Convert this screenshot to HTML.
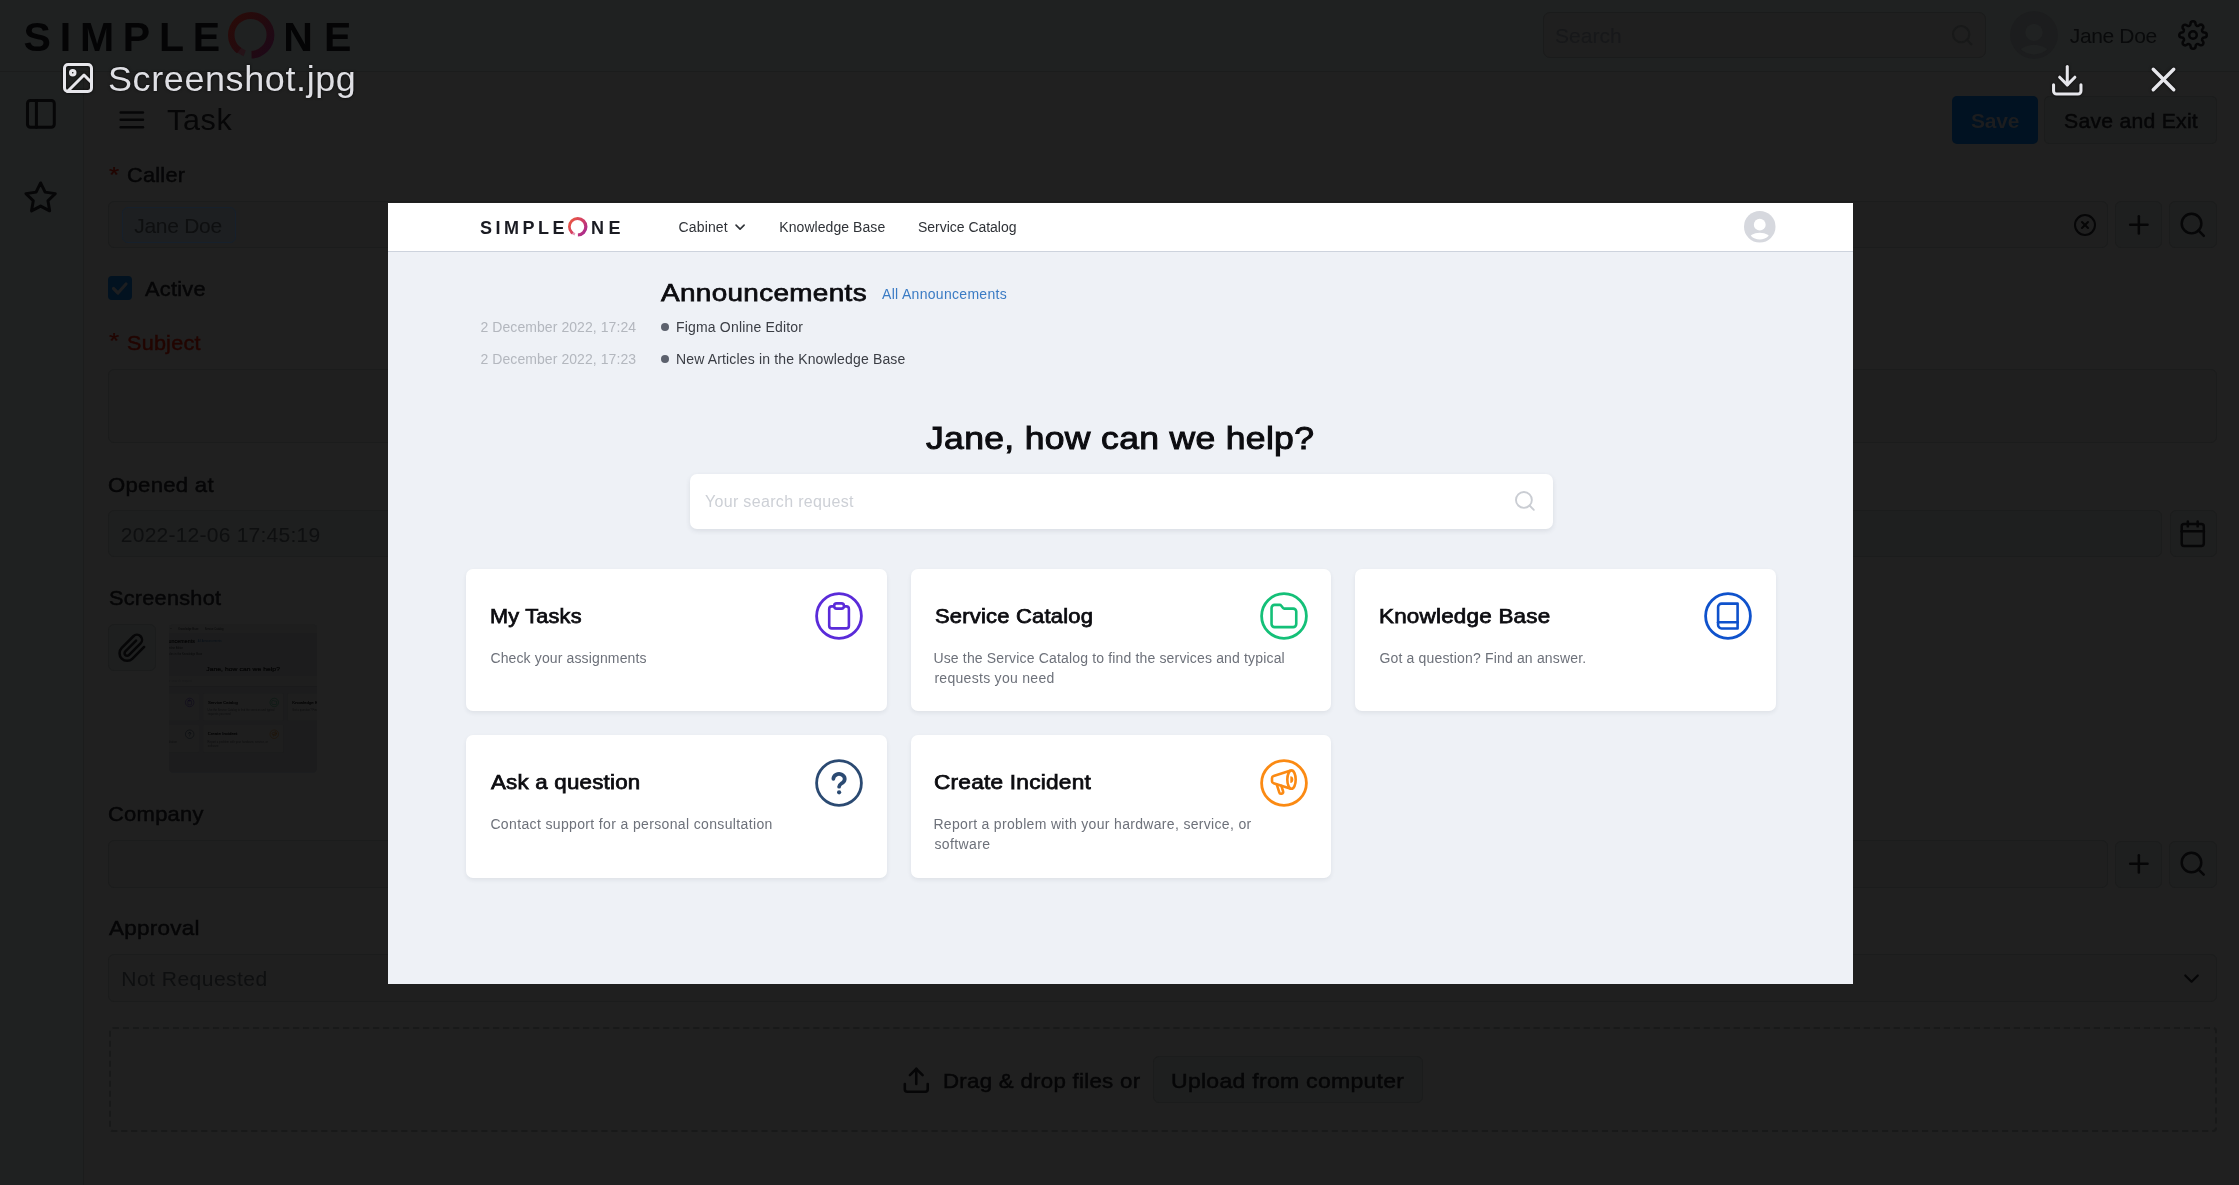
<!DOCTYPE html>
<html lang="en">
<head>
<meta charset="utf-8">
<title>Task - Screenshot.jpg</title>
<style>
html,body{margin:0;padding:0;}
body{width:2239px;height:1185px;overflow:hidden;position:relative;background:#202020;
font-family:"Liberation Sans", sans-serif;-webkit-font-smoothing:antialiased;}
#under,#topbar{position:absolute;left:0;top:0;width:2239px;height:1185px;will-change:transform;}
#modal{position:absolute;left:388px;top:203px;width:1465px;height:781px;background:#eef1f6;overflow:hidden;will-change:transform;}
</style>
</head>
<body>
<div id="under">
<div style="position:absolute;left:0.00px;top:0.00px;width:2239.00px;height:72.00px;box-sizing:border-box;background:#1f2121;border-bottom:1px solid #1b1c1c;"></div>
<div style="position:absolute;left:0.00px;top:72.00px;width:84.00px;height:1113.00px;box-sizing:border-box;background:#1f2121;border-right:1px solid #1b1c1c;"></div>
<span style="position:absolute;left:23.60px;top:16.50px;white-space:nowrap;line-height:1;font-size:41px;font-weight:700;color:#040405;letter-spacing:8.784px;">SIMPLE</span>
<span style="position:absolute;left:283.20px;top:16.50px;white-space:nowrap;line-height:1;font-size:41px;font-weight:700;color:#040405;letter-spacing:11.191px;">NE</span>
<svg style="position:absolute;left:224.30px;top:8.00px;overflow:visible;" width="54.4" height="54.4" viewBox="0 0 54.4 54.4"><defs><linearGradient id="lg1" gradientUnits="userSpaceOnUse" x1="4.00" y1="12.12" x2="50.40" y2="45.76"><stop offset="0" stop-color="#2a0b08"/><stop offset="0.5" stop-color="#230a0e"/><stop offset="1" stop-color="#1c0819"/></linearGradient><clipPath id="lg1a"><polygon points="27.20,27.20 -1.37,63.76 -12.15,51.79 -18.19,36.85 -18.75,20.74 -13.77,5.42 -3.85,-7.28 9.82,-15.82 25.58,-19.17 41.54,-16.93 55.77,-9.36 66.55,2.61 72.59,17.55 73.15,33.66 68.17,48.98 58.25,61.68 44.58,70.22 28.82,73.57 28.01,73.59"/></clipPath><clipPath id="lg1b"><polygon points="27.20,27.20 19.55,48.21 12.83,44.33 10.07,41.57"/></clipPath></defs><path d="M4.00 27.20 a23.20 23.20 0 1 0 46.40 0 a23.20 23.20 0 1 0 -46.40 0 z M10.50 26.96 a16.03 16.03 0 1 0 32.06 0 a16.03 16.03 0 1 0 -32.06 0 z" fill="#251318" fill-rule="evenodd" clip-path="url(#lg1b)"/><path d="M4.00 27.20 a23.20 23.20 0 1 0 46.40 0 a23.20 23.20 0 1 0 -46.40 0 z M10.50 26.96 a16.03 16.03 0 1 0 32.06 0 a16.03 16.03 0 1 0 -32.06 0 z" fill="url(#lg1)" fill-rule="evenodd" clip-path="url(#lg1a)"/></svg>
<div style="position:absolute;left:1542.50px;top:11.60px;width:443.10px;height:46.80px;box-sizing:border-box;background:#1f1f1f;border:1px solid #1a1b1b;border-radius:7px;"></div>
<span style="position:absolute;left:1555.00px;top:24.70px;white-space:nowrap;line-height:1;font-size:21px;font-weight:400;color:#17181a;letter-spacing:0.028px;">Search</span>
<svg style="position:absolute;left:1950.22px;top:23.42px;overflow:visible" width="24.36" height="24.36" viewBox="0 0 24 24" fill="none" stroke="#181919" stroke-width="2.0" stroke-linecap="round" stroke-linejoin="round"><circle cx="11" cy="11" r="8"/><line x1="21" y1="21" x2="16.65" y2="16.65"/></svg>
<svg style="position:absolute;left:2009.80px;top:10.70px;overflow:visible;" width="48" height="48" viewBox="0 0 48 48"><defs><clipPath id="av1"><circle cx="24" cy="24" r="19.6"/></clipPath></defs><circle cx="24" cy="24" r="23.8" fill="#1c1d1e"/><g clip-path="url(#av1)" fill="#202222"><circle cx="24" cy="21.4" r="8.7"/><ellipse cx="24" cy="46" rx="17" ry="12.3"/></g></svg>
<span style="position:absolute;left:2069.80px;top:25.40px;white-space:nowrap;line-height:1;font-size:21px;font-weight:400;color:#090a0b;letter-spacing:-0.360px;">Jane Doe</span>
<svg style="position:absolute;left:2178.00px;top:20.00px;overflow:visible" width="30.00" height="30.00" viewBox="0 0 24 24" fill="none" stroke="#060607" stroke-width="2.0" stroke-linecap="round" stroke-linejoin="round"><circle cx="12" cy="12" r="3"/><path d="M19.4 15a1.65 1.65 0 0 0 .33 1.82l.06.06a2 2 0 0 1 0 2.83 2 2 0 0 1-2.83 0l-.06-.06a1.65 1.65 0 0 0-1.82-.33 1.65 1.65 0 0 0-1 1.51V21a2 2 0 0 1-2 2 2 2 0 0 1-2-2v-.09A1.65 1.65 0 0 0 9 19.4a1.65 1.65 0 0 0-1.82.33l-.06.06a2 2 0 0 1-2.83 0 2 2 0 0 1 0-2.83l.06-.06a1.65 1.65 0 0 0 .33-1.82 1.65 1.65 0 0 0-1.51-1H3a2 2 0 0 1-2-2 2 2 0 0 1 2-2h.09A1.65 1.65 0 0 0 4.6 9a1.65 1.65 0 0 0-.33-1.82l-.06-.06a2 2 0 0 1 0-2.83 2 2 0 0 1 2.83 0l.06.06a1.65 1.65 0 0 0 1.82.33H9a1.65 1.65 0 0 0 1-1.51V3a2 2 0 0 1 2-2 2 2 0 0 1 2 2v.09a1.65 1.65 0 0 0 1 1.51 1.65 1.65 0 0 0 1.82-.33l.06-.06a2 2 0 0 1 2.83 0 2 2 0 0 1 0 2.83l-.06.06a1.65 1.65 0 0 0-.33 1.82V9a1.65 1.65 0 0 0 1.51 1H21a2 2 0 0 1 2 2 2 2 0 0 1-2 2h-.09a1.65 1.65 0 0 0-1.51 1z"/></svg>
<svg style="position:absolute;left:23.47px;top:96.27px;overflow:visible" width="35.76" height="35.76" viewBox="0 0 24 24" fill="none" stroke="#060607" stroke-width="2.0" stroke-linecap="round" stroke-linejoin="round"><rect x="3" y="3" width="18" height="18" rx="2" ry="2"/><line x1="9" y1="3" x2="9" y2="21"/></svg>
<svg style="position:absolute;left:23.29px;top:180.37px;overflow:visible" width="35.22" height="35.22" viewBox="0 0 24 24" fill="none" stroke="#060607" stroke-width="2.0" stroke-linecap="round" stroke-linejoin="round"><polygon points="12 2 15.09 8.26 22 9.27 17 14.14 18.18 21.02 12 17.77 5.82 21.02 7 14.14 2 9.27 8.91 8.26 12 2"/></svg>
<svg style="position:absolute;left:117.32px;top:105.17px;overflow:visible" width="29.67" height="29.67" viewBox="0 0 24 24" fill="none" stroke="#060607" stroke-width="2.0" stroke-linecap="round" stroke-linejoin="round"><line x1="3" y1="12" x2="21" y2="12"/><line x1="3" y1="6" x2="21" y2="6"/><line x1="3" y1="18" x2="21" y2="18"/></svg>
<span style="position:absolute;left:167.00px;top:106.00px;white-space:nowrap;line-height:1;font-size:29px;font-weight:400;color:#060607;letter-spacing:0.6px;transform:scaleX(1.0528);transform-origin:0 0;">Task</span>
<div style="position:absolute;left:1952.00px;top:96.00px;width:86.00px;height:48.00px;box-sizing:border-box;background:#011222;border-radius:5px;"></div>
<span style="position:absolute;left:1971.00px;top:109.80px;white-space:nowrap;line-height:1;font-size:21px;font-weight:700;color:#1c1d1f;letter-spacing:-0.222px;">Save</span>
<div style="position:absolute;left:2044.00px;top:96.00px;width:172.80px;height:48.00px;box-sizing:border-box;background:#1e1f1f;border:1px solid #1b1c1c;border-radius:5px;"></div>
<span style="position:absolute;left:2063.70px;top:109.80px;white-space:nowrap;line-height:1;font-size:21px;font-weight:400;color:#060607;letter-spacing:0.25px;transform:scaleX(1.0087);transform-origin:0 0;-webkit-text-stroke:0.45px #060607;">Save and Exit</span>
<span style="position:absolute;left:108.90px;top:164.35px;white-space:nowrap;line-height:1;font-size:26px;font-weight:400;color:#220500;letter-spacing:0.000px;-webkit-text-stroke:0.3px #220500;transform:scaleY(0.82);transform-origin:0 0;">*</span>
<span style="position:absolute;left:126.77px;top:163.80px;white-space:nowrap;line-height:1;font-size:21px;font-weight:400;color:#060607;letter-spacing:0.25px;transform:scaleX(1.0344);transform-origin:0 0;-webkit-text-stroke:0.45px #060607;">Caller</span>
<div style="position:absolute;left:108.10px;top:201.40px;width:2000.20px;height:47.10px;box-sizing:border-box;background:#1f1f1f;border:1px solid #1b1c1c;border-radius:6px;"></div>
<div style="position:absolute;left:122.30px;top:207.20px;width:113.50px;height:35.50px;box-sizing:border-box;background:#1d1f21;border:1px solid #16202c;border-radius:6px;"></div>
<span style="position:absolute;left:134.20px;top:215.00px;white-space:nowrap;line-height:1;font-size:21px;font-weight:400;color:#0e0f10;letter-spacing:-0.274px;">Jane Doe</span>
<svg style="position:absolute;left:2072.80px;top:213.40px;overflow:visible" width="24.00" height="24.00" viewBox="0 0 24 24" fill="none" stroke="#060607" stroke-width="2.0" stroke-linecap="round" stroke-linejoin="round"><circle cx="12" cy="12" r="10"/><line x1="15" y1="9" x2="9" y2="15"/><line x1="9" y1="9" x2="15" y2="15"/></svg>
<div style="position:absolute;left:2115.40px;top:201.40px;width:47.10px;height:47.10px;box-sizing:border-box;background:#1e1f1f;border:1px solid #1b1c1c;border-radius:6px;"></div>
<svg style="position:absolute;left:2124.25px;top:210.15px;overflow:visible" width="29.70" height="29.70" viewBox="0 0 24 24" fill="none" stroke="#060607" stroke-width="2.0" stroke-linecap="round" stroke-linejoin="round"><line x1="12" y1="5" x2="12" y2="19"/><line x1="5" y1="12" x2="19" y2="12"/></svg>
<div style="position:absolute;left:2168.80px;top:201.40px;width:48.00px;height:47.10px;box-sizing:border-box;background:#1e1f1f;border:1px solid #1b1c1c;border-radius:6px;"></div>
<svg style="position:absolute;left:2178.29px;top:210.49px;overflow:visible" width="29.52" height="29.52" viewBox="0 0 24 24" fill="none" stroke="#060607" stroke-width="2.0" stroke-linecap="round" stroke-linejoin="round"><circle cx="11" cy="11" r="8"/><line x1="21" y1="21" x2="16.65" y2="16.65"/></svg>
<div style="position:absolute;left:108.40px;top:276.00px;width:23.20px;height:24.00px;box-sizing:border-box;background:#021220;border-radius:4px;"></div>
<svg style="position:absolute;left:108.40px;top:276.00px;overflow:visible;" width="23.2" height="24" viewBox="0 0 23.2 24"><polyline points="5.5,12.5 10,17 18,8" fill="none" stroke="#1d1e20" stroke-width="3.2" stroke-linecap="round" stroke-linejoin="round"/></svg>
<span style="position:absolute;left:144.80px;top:278.00px;white-space:nowrap;line-height:1;font-size:21px;font-weight:400;color:#060607;letter-spacing:0.25px;transform:scaleX(1.0354);transform-origin:0 0;-webkit-text-stroke:0.45px #060607;">Active</span>
<span style="position:absolute;left:108.90px;top:330.05px;white-space:nowrap;line-height:1;font-size:26px;font-weight:400;color:#220500;letter-spacing:0.000px;-webkit-text-stroke:0.3px #220500;transform:scaleY(0.82);transform-origin:0 0;">*</span>
<span style="position:absolute;left:127.40px;top:331.80px;white-space:nowrap;line-height:1;font-size:21px;font-weight:400;color:#220500;letter-spacing:0.25px;transform:scaleX(1.0264);transform-origin:0 0;-webkit-text-stroke:0.45px #220500;">Subject</span>
<div style="position:absolute;left:108.10px;top:369.00px;width:2108.70px;height:74.40px;box-sizing:border-box;background:#1f1f1f;border:1px solid #1b1c1c;border-radius:6px;"></div>
<span style="position:absolute;left:107.75px;top:473.70px;white-space:nowrap;line-height:1;font-size:21px;font-weight:400;color:#060607;letter-spacing:0.25px;transform:scaleX(1.0550);transform-origin:0 0;-webkit-text-stroke:0.45px #060607;">Opened at</span>
<div style="position:absolute;left:108.10px;top:510.10px;width:2054.10px;height:47.10px;box-sizing:border-box;background:#1e1f1f;border:1px solid #1b1c1c;border-radius:6px;"></div>
<span style="position:absolute;left:120.80px;top:524.20px;white-space:nowrap;line-height:1;font-size:21px;font-weight:400;color:#0e0f10;letter-spacing:0.238px;">2022-12-06 17:45:19</span>
<div style="position:absolute;left:2169.60px;top:510.10px;width:47.20px;height:47.10px;box-sizing:border-box;background:#1e1f1f;border:1px solid #1b1c1c;border-radius:6px;"></div>
<svg style="position:absolute;left:2178.45px;top:519.15px;overflow:visible" width="29.50" height="29.50" viewBox="0 0 24 24" fill="none" stroke="#060607" stroke-width="2.0" stroke-linecap="round" stroke-linejoin="round"><rect x="3" y="4" width="18" height="18" rx="2" ry="2"/><line x1="16" y1="2" x2="16" y2="6"/><line x1="8" y1="2" x2="8" y2="6"/><line x1="3" y1="10" x2="21" y2="10"/></svg>
<span style="position:absolute;left:108.80px;top:587.00px;white-space:nowrap;line-height:1;font-size:21px;font-weight:400;color:#060607;letter-spacing:0.25px;transform:scaleX(1.0327);transform-origin:0 0;-webkit-text-stroke:0.45px #060607;">Screenshot</span>
<div style="position:absolute;left:108.40px;top:624.10px;width:47.20px;height:47.40px;box-sizing:border-box;background:#1e1f1f;border:1px solid #1b1c1c;border-radius:6px;"></div>
<svg style="position:absolute;left:116.52px;top:633.47px;overflow:visible" width="30.37" height="30.37" viewBox="0 0 24 24" fill="none" stroke="#060607" stroke-width="2.0" stroke-linecap="round" stroke-linejoin="round"><path d="M21.44 11.05l-9.19 9.19a6 6 0 0 1-8.49-8.49l9.19-9.19a4 4 0 0 1 5.66 5.66l-9.2 9.19a2 2 0 0 1-2.83-2.83l8.49-8.48"/></svg>
<div style="position:absolute;left:168.6px;top:624.2px;width:148.8px;height:148.9px;border-radius:5px;overflow:hidden;background:#1c1e21;"><div style="position:absolute;left:-64.78px;top:0;width:1465px;height:781px;background:#eef1f6;transform:scale(0.19);transform-origin:0 0;filter:brightness(0.118);"><div style="position:absolute;left:0.00px;top:0.00px;width:1465.00px;height:49.00px;box-sizing:border-box;background:#fff;border-bottom:1px solid #cdd3dd;"></div>
<span style="position:absolute;left:92.00px;top:15.50px;white-space:nowrap;line-height:1;font-size:18px;font-weight:700;color:#1a1b22;letter-spacing:3.480px;">SIMPLE</span>
<span style="position:absolute;left:202.90px;top:15.50px;white-space:nowrap;line-height:1;font-size:18px;font-weight:700;color:#1a1b22;letter-spacing:4.701px;">NE</span>
<svg style="position:absolute;left:176.22px;top:10.17px;overflow:visible;" width="27.5" height="27.5" viewBox="0 0 27.5 27.5"><defs><linearGradient id="lg2t" gradientUnits="userSpaceOnUse" x1="4.00" y1="7.41" x2="23.50" y2="21.55"><stop offset="0" stop-color="#ec5a3c"/><stop offset="0.5" stop-color="#d23f68"/><stop offset="1" stop-color="#9d2499"/></linearGradient><clipPath id="lg2ta"><polygon points="13.75,13.75 1.74,29.12 -2.79,24.08 -5.32,17.80 -5.56,11.04 -3.47,4.60 0.70,-0.74 6.45,-4.33 13.07,-5.74 19.78,-4.80 25.76,-1.62 30.29,3.42 32.82,9.70 33.06,16.46 30.97,22.90 26.80,28.24 21.05,31.83 14.43,33.24 14.09,33.25"/></clipPath><clipPath id="lg2tb"><polygon points="13.75,13.75 10.54,22.58 7.71,20.95 6.55,19.79"/></clipPath></defs><path d="M4.00 13.75 a9.75 9.75 0 1 0 19.50 0 a9.75 9.75 0 1 0 -19.50 0 z M6.72 13.65 a6.75 6.75 0 1 0 13.50 0 a6.75 6.75 0 1 0 -13.50 0 z" fill="#e79ab8" fill-rule="evenodd" clip-path="url(#lg2tb)"/><path d="M4.00 13.75 a9.75 9.75 0 1 0 19.50 0 a9.75 9.75 0 1 0 -19.50 0 z M6.72 13.65 a6.75 6.75 0 1 0 13.50 0 a6.75 6.75 0 1 0 -13.50 0 z" fill="url(#lg2t)" fill-rule="evenodd" clip-path="url(#lg2ta)"/></svg>
<span style="position:absolute;left:290.50px;top:16.80px;white-space:nowrap;line-height:1;font-size:14px;font-weight:400;color:#2f3237;letter-spacing:0.156px;">Cabinet</span>
<svg style="position:absolute;left:343.92px;top:16.42px;overflow:visible" width="16.16" height="16.16" viewBox="0 0 24 24" fill="none" stroke="#2f3237" stroke-width="2.4" stroke-linecap="round" stroke-linejoin="round"><polyline points="6 9 12 15 18 9"/></svg>
<span style="position:absolute;left:391.30px;top:16.80px;white-space:nowrap;line-height:1;font-size:14px;font-weight:400;color:#2f3237;letter-spacing:0.062px;">Knowledge Base</span>
<span style="position:absolute;left:530.00px;top:16.80px;white-space:nowrap;line-height:1;font-size:14px;font-weight:400;color:#2f3237;letter-spacing:-0.024px;">Service Catalog</span>
<svg style="position:absolute;left:1356.05px;top:8.10px;overflow:visible;" width="31.5" height="31.5" viewBox="0 0 32 32"><defs><clipPath id="av2t"><circle cx="16" cy="16" r="12.9"/></clipPath></defs><circle cx="16" cy="16" r="16" fill="#d6d8de"/><g clip-path="url(#av2t)" fill="#fff"><circle cx="16" cy="13.9" r="6"/><ellipse cx="16" cy="29.5" rx="11.5" ry="7.5"/></g></svg>
<span style="position:absolute;left:272.50px;top:77.50px;white-space:nowrap;line-height:1;font-size:24.5px;font-weight:400;color:#0c0c10;letter-spacing:0.3px;transform:scaleX(1.1379);transform-origin:0 0;-webkit-text-stroke:0.75px #0c0c10;">Announcements</span>
<span style="position:absolute;left:494.00px;top:84.30px;white-space:nowrap;line-height:1;font-size:14px;font-weight:400;color:#3a7bc4;letter-spacing:0.305px;">All Announcements</span>
<span style="position:absolute;left:92.50px;top:117.00px;white-space:nowrap;line-height:1;font-size:14px;font-weight:400;color:#b3b7be;letter-spacing:0.068px;">2 December 2022, 17:24</span>
<div style="position:absolute;left:272.50px;top:120.25px;width:8.00px;height:8.00px;box-sizing:border-box;background:#5c616d;border-radius:50%;"></div>
<span style="position:absolute;left:288.00px;top:117.00px;white-space:nowrap;line-height:1;font-size:14px;font-weight:400;color:#3a3d44;letter-spacing:0.178px;">Figma Online Editor</span>
<span style="position:absolute;left:92.50px;top:148.75px;white-space:nowrap;line-height:1;font-size:14px;font-weight:400;color:#b3b7be;letter-spacing:0.068px;">2 December 2022, 17:23</span>
<div style="position:absolute;left:272.50px;top:151.75px;width:8.00px;height:8.00px;box-sizing:border-box;background:#5c616d;border-radius:50%;"></div>
<span style="position:absolute;left:288.00px;top:148.75px;white-space:nowrap;line-height:1;font-size:14px;font-weight:400;color:#3a3d44;letter-spacing:0.156px;">New Articles in the Knowledge Base</span>
<span style="position:absolute;left:538.25px;top:219.25px;white-space:nowrap;line-height:1;font-size:32px;font-weight:400;color:#0c0c10;letter-spacing:0.3px;transform:scaleX(1.1095);transform-origin:0 0;-webkit-text-stroke:1.0px #0c0c10;">Jane, how can we help?</span>
<div style="position:absolute;left:302.00px;top:271.00px;width:863.00px;height:55.00px;box-sizing:border-box;background:#fff;border-radius:7px;box-shadow:0 2px 5px rgba(40,50,70,0.10);"></div>
<span style="position:absolute;left:316.90px;top:291.40px;white-space:nowrap;line-height:1;font-size:16px;font-weight:400;color:#cdd0d6;letter-spacing:0.335px;">Your search request</span>
<svg style="position:absolute;left:1124.99px;top:285.84px;overflow:visible" width="23.82" height="23.82" viewBox="0 0 24 24" fill="none" stroke="#cacdd3" stroke-width="1.9" stroke-linecap="round" stroke-linejoin="round"><circle cx="11" cy="11" r="8"/><line x1="21" y1="21" x2="16.65" y2="16.65"/></svg>
<div style="position:absolute;left:78.00px;top:366.00px;width:420.50px;height:142.20px;box-sizing:border-box;background:#fff;border-radius:7px;box-shadow:0 2px 4px rgba(40,50,70,0.08);"></div>
<div style="position:absolute;left:522.75px;top:366.00px;width:420.25px;height:142.20px;box-sizing:border-box;background:#fff;border-radius:7px;box-shadow:0 2px 4px rgba(40,50,70,0.08);"></div>
<div style="position:absolute;left:967.30px;top:366.00px;width:420.50px;height:142.20px;box-sizing:border-box;background:#fff;border-radius:7px;box-shadow:0 2px 4px rgba(40,50,70,0.08);"></div>
<div style="position:absolute;left:78.00px;top:531.70px;width:420.50px;height:143.00px;box-sizing:border-box;background:#fff;border-radius:7px;box-shadow:0 2px 4px rgba(40,50,70,0.08);"></div>
<div style="position:absolute;left:522.75px;top:531.70px;width:420.25px;height:143.00px;box-sizing:border-box;background:#fff;border-radius:7px;box-shadow:0 2px 4px rgba(40,50,70,0.08);"></div>
<span style="position:absolute;left:102.14px;top:402.90px;white-space:nowrap;line-height:1;font-size:20.4px;font-weight:400;color:#0c0c10;letter-spacing:0.2px;transform:scaleX(1.0637);transform-origin:0 0;-webkit-text-stroke:0.75px #0c0c10;">My Tasks</span>
<span style="position:absolute;left:102.40px;top:448.00px;white-space:nowrap;line-height:1;font-size:14px;font-weight:400;color:#6d717a;letter-spacing:0.134px;">Check your assignments</span>
<span style="position:absolute;left:547.20px;top:402.90px;white-space:nowrap;line-height:1;font-size:20.4px;font-weight:400;color:#0c0c10;letter-spacing:0.2px;transform:scaleX(1.0758);transform-origin:0 0;-webkit-text-stroke:0.75px #0c0c10;">Service Catalog</span>
<span style="position:absolute;left:545.40px;top:448.00px;white-space:nowrap;line-height:1;font-size:14px;font-weight:400;color:#6d717a;letter-spacing:0.162px;">Use the Service Catalog to find the services and typical</span>
<span style="position:absolute;left:546.40px;top:467.70px;white-space:nowrap;line-height:1;font-size:14px;font-weight:400;color:#6d717a;letter-spacing:0.293px;">requests you need</span>
<span style="position:absolute;left:991.10px;top:402.90px;white-space:nowrap;line-height:1;font-size:20.4px;font-weight:400;color:#0c0c10;letter-spacing:0.2px;transform:scaleX(1.0998);transform-origin:0 0;-webkit-text-stroke:0.75px #0c0c10;">Knowledge Base</span>
<span style="position:absolute;left:991.40px;top:448.00px;white-space:nowrap;line-height:1;font-size:14px;font-weight:400;color:#6d717a;letter-spacing:0.174px;">Got a question? Find an answer.</span>
<span style="position:absolute;left:103.20px;top:569.00px;white-space:nowrap;line-height:1;font-size:20.4px;font-weight:400;color:#0c0c10;letter-spacing:0.2px;transform:scaleX(1.0947);transform-origin:0 0;-webkit-text-stroke:0.75px #0c0c10;">Ask a question</span>
<span style="position:absolute;left:102.40px;top:614.40px;white-space:nowrap;line-height:1;font-size:14px;font-weight:400;color:#6d717a;letter-spacing:0.358px;">Contact support for a personal consultation</span>
<span style="position:absolute;left:546.09px;top:569.00px;white-space:nowrap;line-height:1;font-size:20.4px;font-weight:400;color:#0c0c10;letter-spacing:0.2px;transform:scaleX(1.1110);transform-origin:0 0;-webkit-text-stroke:0.75px #0c0c10;">Create Incident</span>
<span style="position:absolute;left:545.40px;top:614.40px;white-space:nowrap;line-height:1;font-size:14px;font-weight:400;color:#6d717a;letter-spacing:0.321px;">Report a problem with your hardware, service, or</span>
<span style="position:absolute;left:546.40px;top:634.00px;white-space:nowrap;line-height:1;font-size:14px;font-weight:400;color:#6d717a;letter-spacing:0.397px;">software</span>
<svg style="position:absolute;left:427.10px;top:389.00px;overflow:visible;" width="48" height="48" viewBox="0 0 48 48"><circle cx="24" cy="24" r="22.4" fill="none" stroke="#5a2bd9" stroke-width="2.8"/><g fill="none" stroke="#5a2bd9" stroke-width="2.6" stroke-linecap="round" stroke-linejoin="round"><rect x="14.2" y="14.4" width="19.7" height="22" rx="2.6"/><rect x="19.2" y="11.4" width="9.7" height="5.2" rx="2.4" fill="#fff"/></g></svg>
<svg style="position:absolute;left:871.55px;top:389.00px;overflow:visible;" width="48" height="48" viewBox="0 0 48 48"><circle cx="24" cy="24" r="22.4" fill="none" stroke="#14c078" stroke-width="2.8"/><g fill="none" stroke="#14c078" stroke-width="2.6" stroke-linecap="round" stroke-linejoin="round"><path d="M11.55 15.9 a3 3 0 0 1 3-3 h5.3 a1.5 1.5 0 0 1 1.2 0.6 l2 2.5 a1.5 1.5 0 0 0 1.2 0.6 h9 a3 3 0 0 1 3 3 v12.5 a3 3 0 0 1-3 3 h-18.7 a3 3 0 0 1-3-3 z"/></g></svg>
<svg style="position:absolute;left:1316.10px;top:389.00px;overflow:visible;" width="48" height="48" viewBox="0 0 48 48"><circle cx="24" cy="24" r="22.4" fill="none" stroke="#0f52cc" stroke-width="2.8"/><g fill="none" stroke="#0f52cc" stroke-width="2.6" stroke-linecap="round" stroke-linejoin="round"><path d="M33.6 11.6 v24.85 h-16 a3.5 3.5 0 0 1-3.5-3.5 v-17.85 a3.5 3.5 0 0 1 3.5-3.5 z"/><path d="M14.1 30.2 h19.5"/></g></svg>
<svg style="position:absolute;left:427.10px;top:555.50px;overflow:visible;" width="48" height="48" viewBox="0 0 48 48"><circle cx="24" cy="24" r="22.4" fill="none" stroke="#2b4a72" stroke-width="2.8"/><g fill="none" stroke="#2b4a72" stroke-width="2.6" stroke-linecap="round" stroke-linejoin="round"><path d="M18.4 19.8 a5.65 4.9 0 1 1 9.2 3.9 c-1.9 1.4-3.5 2.2-3.5 4.0" stroke-width="3.8"/><circle cx="24.1" cy="33.3" r="2.1" fill="#2b4a72" stroke="none"/></g></svg>
<svg style="position:absolute;left:871.55px;top:555.50px;overflow:visible;" width="48" height="48" viewBox="0 0 48 48"><circle cx="24" cy="24" r="22.4" fill="none" stroke="#fb8a13" stroke-width="2.8"/><g fill="none" stroke="#fb8a13" stroke-width="2.6" stroke-linecap="round" stroke-linejoin="round"><path d="M30 11.8 L13.6 16.9 a2.2 2.2 0 0 0 -1.6 2.1 v3.2 a2.2 2.2 0 0 0 1.6 2.1 L30 29.4"/><ellipse cx="31.5" cy="20.6" rx="4.2" ry="9.2"/><path d="M30.3 17.2 a3 3.4 0 0 1 0 6.8 z" fill="#fb8a13" stroke="none"/><path d="M16.9 25.8 l2.3 7.4 a2 2 0 0 0 3.9 -0.9 l-1.7-5.4"/></g></svg></div></div>
<span style="position:absolute;left:107.65px;top:803.30px;white-space:nowrap;line-height:1;font-size:21px;font-weight:400;color:#060607;letter-spacing:0.25px;transform:scaleX(1.0454);transform-origin:0 0;-webkit-text-stroke:0.45px #060607;">Company</span>
<div style="position:absolute;left:108.10px;top:840.20px;width:2000.20px;height:47.40px;box-sizing:border-box;background:#1f1f1f;border:1px solid #1b1c1c;border-radius:6px;"></div>
<div style="position:absolute;left:2115.40px;top:840.50px;width:47.10px;height:47.10px;box-sizing:border-box;background:#1e1f1f;border:1px solid #1b1c1c;border-radius:6px;"></div>
<svg style="position:absolute;left:2124.25px;top:849.15px;overflow:visible" width="29.70" height="29.70" viewBox="0 0 24 24" fill="none" stroke="#060607" stroke-width="2.0" stroke-linecap="round" stroke-linejoin="round"><line x1="12" y1="5" x2="12" y2="19"/><line x1="5" y1="12" x2="19" y2="12"/></svg>
<div style="position:absolute;left:2168.80px;top:840.50px;width:47.80px;height:47.10px;box-sizing:border-box;background:#1e1f1f;border:1px solid #1b1c1c;border-radius:6px;"></div>
<svg style="position:absolute;left:2178.35px;top:849.45px;overflow:visible" width="29.40" height="29.40" viewBox="0 0 24 24" fill="none" stroke="#060607" stroke-width="2.0" stroke-linecap="round" stroke-linejoin="round"><circle cx="11" cy="11" r="8"/><line x1="21" y1="21" x2="16.65" y2="16.65"/></svg>
<span style="position:absolute;left:108.70px;top:917.00px;white-space:nowrap;line-height:1;font-size:21px;font-weight:400;color:#060607;letter-spacing:0.25px;transform:scaleX(1.0707);transform-origin:0 0;-webkit-text-stroke:0.45px #060607;">Approval</span>
<div style="position:absolute;left:108.10px;top:954.30px;width:2108.50px;height:47.30px;box-sizing:border-box;background:#1f1f1f;border:1px solid #1b1c1c;border-radius:6px;"></div>
<span style="position:absolute;left:121.30px;top:968.00px;white-space:nowrap;line-height:1;font-size:21px;font-weight:400;color:#0e0f10;letter-spacing:0.483px;">Not Requested</span>
<svg style="position:absolute;left:2179.14px;top:966.24px;overflow:visible" width="25.11" height="25.11" viewBox="0 0 24 24" fill="none" stroke="#060607" stroke-width="2.0" stroke-linecap="round" stroke-linejoin="round"><polyline points="6 9 12 15 18 9"/></svg>
<div style="position:absolute;left:108.70px;top:1027.40px;width:2107.90px;height:104.80px;box-sizing:border-box;border:2px dashed #181919;border-radius:4px;"></div>
<svg style="position:absolute;left:900.73px;top:1064.78px;overflow:visible" width="30.54" height="30.54" viewBox="0 0 24 24" fill="none" stroke="#060607" stroke-width="2.0" stroke-linecap="round" stroke-linejoin="round"><path d="M21 15v4a2 2 0 0 1-2 2H5a2 2 0 0 1-2-2v-4"/><polyline points="17 8 12 3 7 8"/><line x1="12" y1="3" x2="12" y2="15"/></svg>
<span style="position:absolute;left:942.94px;top:1069.70px;white-space:nowrap;line-height:1;font-size:21px;font-weight:400;color:#060607;letter-spacing:0.25px;transform:scaleX(1.0614);transform-origin:0 0;-webkit-text-stroke:0.45px #060607;">Drag &amp; drop files or</span>
<div style="position:absolute;left:1153.40px;top:1056.40px;width:270.10px;height:46.20px;box-sizing:border-box;background:#1e1f1f;border:1px solid #1b1c1c;border-radius:6px;"></div>
<span style="position:absolute;left:1171.20px;top:1069.70px;white-space:nowrap;line-height:1;font-size:21px;font-weight:400;color:#060607;letter-spacing:0.25px;transform:scaleX(1.0964);transform-origin:0 0;-webkit-text-stroke:0.45px #060607;">Upload from computer</span>
</div>
<div id="topbar" style="filter:drop-shadow(0 0 1.6px rgba(0,0,0,0.75));">
<svg style="position:absolute;left:59.90px;top:59.90px;overflow:visible" width="36.00" height="36.00" viewBox="0 0 24 24" fill="none" stroke="#e6e6eb" stroke-width="2.0" stroke-linecap="round" stroke-linejoin="round"><rect x="3" y="3" width="18" height="18" rx="2.4" ry="2.4"/><circle cx="8.5" cy="8.5" r="1.5"/><polyline points="21 15 16 10 5 21"/></svg>
<span style="position:absolute;left:107.95px;top:62.20px;white-space:nowrap;line-height:1;font-size:34.3px;font-weight:400;color:#dfdfe4;letter-spacing:0.6px;transform:scaleX(1.0475);transform-origin:0 0;">Screenshot.jpg</span>
<svg style="position:absolute;left:2048.78px;top:61.83px;overflow:visible" width="36.54" height="36.54" viewBox="0 0 24 24" fill="none" stroke="#e6e6eb" stroke-width="2.0" stroke-linecap="round" stroke-linejoin="round"><path d="M21 15v4a2 2 0 0 1-2 2H5a2 2 0 0 1-2-2v-4"/><polyline points="7 10 12 15 17 10"/><line x1="12" y1="15" x2="12" y2="3"/></svg>
<svg style="position:absolute;left:2142.51px;top:59.41px;overflow:visible" width="40.97" height="40.97" viewBox="0 0 24 24" fill="none" stroke="#e6e6eb" stroke-width="2.0" stroke-linecap="round" stroke-linejoin="round"><line x1="18" y1="6" x2="6" y2="18"/><line x1="6" y1="6" x2="18" y2="18"/></svg>
</div>
<div id="modal">
<div style="position:absolute;left:0.00px;top:0.00px;width:1465.00px;height:49.00px;box-sizing:border-box;background:#fff;border-bottom:1px solid #cdd3dd;"></div>
<span style="position:absolute;left:92.00px;top:15.50px;white-space:nowrap;line-height:1;font-size:18px;font-weight:700;color:#1a1b22;letter-spacing:3.480px;">SIMPLE</span>
<span style="position:absolute;left:202.90px;top:15.50px;white-space:nowrap;line-height:1;font-size:18px;font-weight:700;color:#1a1b22;letter-spacing:4.701px;">NE</span>
<svg style="position:absolute;left:176.22px;top:10.17px;overflow:visible;" width="27.5" height="27.5" viewBox="0 0 27.5 27.5"><defs><linearGradient id="lg2" gradientUnits="userSpaceOnUse" x1="4.00" y1="7.41" x2="23.50" y2="21.55"><stop offset="0" stop-color="#ec5a3c"/><stop offset="0.5" stop-color="#d23f68"/><stop offset="1" stop-color="#9d2499"/></linearGradient><clipPath id="lg2a"><polygon points="13.75,13.75 1.74,29.12 -2.79,24.08 -5.32,17.80 -5.56,11.04 -3.47,4.60 0.70,-0.74 6.45,-4.33 13.07,-5.74 19.78,-4.80 25.76,-1.62 30.29,3.42 32.82,9.70 33.06,16.46 30.97,22.90 26.80,28.24 21.05,31.83 14.43,33.24 14.09,33.25"/></clipPath><clipPath id="lg2b"><polygon points="13.75,13.75 10.54,22.58 7.71,20.95 6.55,19.79"/></clipPath></defs><path d="M4.00 13.75 a9.75 9.75 0 1 0 19.50 0 a9.75 9.75 0 1 0 -19.50 0 z M6.72 13.65 a6.75 6.75 0 1 0 13.50 0 a6.75 6.75 0 1 0 -13.50 0 z" fill="#e79ab8" fill-rule="evenodd" clip-path="url(#lg2b)"/><path d="M4.00 13.75 a9.75 9.75 0 1 0 19.50 0 a9.75 9.75 0 1 0 -19.50 0 z M6.72 13.65 a6.75 6.75 0 1 0 13.50 0 a6.75 6.75 0 1 0 -13.50 0 z" fill="url(#lg2)" fill-rule="evenodd" clip-path="url(#lg2a)"/></svg>
<span style="position:absolute;left:290.50px;top:16.80px;white-space:nowrap;line-height:1;font-size:14px;font-weight:400;color:#2f3237;letter-spacing:0.156px;">Cabinet</span>
<svg style="position:absolute;left:343.92px;top:16.42px;overflow:visible" width="16.16" height="16.16" viewBox="0 0 24 24" fill="none" stroke="#2f3237" stroke-width="2.4" stroke-linecap="round" stroke-linejoin="round"><polyline points="6 9 12 15 18 9"/></svg>
<span style="position:absolute;left:391.30px;top:16.80px;white-space:nowrap;line-height:1;font-size:14px;font-weight:400;color:#2f3237;letter-spacing:0.062px;">Knowledge Base</span>
<span style="position:absolute;left:530.00px;top:16.80px;white-space:nowrap;line-height:1;font-size:14px;font-weight:400;color:#2f3237;letter-spacing:-0.024px;">Service Catalog</span>
<svg style="position:absolute;left:1356.05px;top:8.10px;overflow:visible;" width="31.5" height="31.5" viewBox="0 0 32 32"><defs><clipPath id="av2"><circle cx="16" cy="16" r="12.9"/></clipPath></defs><circle cx="16" cy="16" r="16" fill="#d6d8de"/><g clip-path="url(#av2)" fill="#fff"><circle cx="16" cy="13.9" r="6"/><ellipse cx="16" cy="29.5" rx="11.5" ry="7.5"/></g></svg>
<span style="position:absolute;left:272.50px;top:77.50px;white-space:nowrap;line-height:1;font-size:24.5px;font-weight:400;color:#0c0c10;letter-spacing:0.3px;transform:scaleX(1.1379);transform-origin:0 0;-webkit-text-stroke:0.75px #0c0c10;">Announcements</span>
<span style="position:absolute;left:494.00px;top:84.30px;white-space:nowrap;line-height:1;font-size:14px;font-weight:400;color:#3a7bc4;letter-spacing:0.305px;">All Announcements</span>
<span style="position:absolute;left:92.50px;top:117.00px;white-space:nowrap;line-height:1;font-size:14px;font-weight:400;color:#b3b7be;letter-spacing:0.068px;">2 December 2022, 17:24</span>
<div style="position:absolute;left:272.50px;top:120.25px;width:8.00px;height:8.00px;box-sizing:border-box;background:#5c616d;border-radius:50%;"></div>
<span style="position:absolute;left:288.00px;top:117.00px;white-space:nowrap;line-height:1;font-size:14px;font-weight:400;color:#3a3d44;letter-spacing:0.178px;">Figma Online Editor</span>
<span style="position:absolute;left:92.50px;top:148.75px;white-space:nowrap;line-height:1;font-size:14px;font-weight:400;color:#b3b7be;letter-spacing:0.068px;">2 December 2022, 17:23</span>
<div style="position:absolute;left:272.50px;top:151.75px;width:8.00px;height:8.00px;box-sizing:border-box;background:#5c616d;border-radius:50%;"></div>
<span style="position:absolute;left:288.00px;top:148.75px;white-space:nowrap;line-height:1;font-size:14px;font-weight:400;color:#3a3d44;letter-spacing:0.156px;">New Articles in the Knowledge Base</span>
<span style="position:absolute;left:538.25px;top:219.25px;white-space:nowrap;line-height:1;font-size:32px;font-weight:400;color:#0c0c10;letter-spacing:0.3px;transform:scaleX(1.1095);transform-origin:0 0;-webkit-text-stroke:1.0px #0c0c10;">Jane, how can we help?</span>
<div style="position:absolute;left:302.00px;top:271.00px;width:863.00px;height:55.00px;box-sizing:border-box;background:#fff;border-radius:7px;box-shadow:0 2px 5px rgba(40,50,70,0.10);"></div>
<span style="position:absolute;left:316.90px;top:291.40px;white-space:nowrap;line-height:1;font-size:16px;font-weight:400;color:#cdd0d6;letter-spacing:0.335px;">Your search request</span>
<svg style="position:absolute;left:1124.99px;top:285.84px;overflow:visible" width="23.82" height="23.82" viewBox="0 0 24 24" fill="none" stroke="#cacdd3" stroke-width="1.9" stroke-linecap="round" stroke-linejoin="round"><circle cx="11" cy="11" r="8"/><line x1="21" y1="21" x2="16.65" y2="16.65"/></svg>
<div style="position:absolute;left:78.00px;top:366.00px;width:420.50px;height:142.20px;box-sizing:border-box;background:#fff;border-radius:7px;box-shadow:0 2px 4px rgba(40,50,70,0.08);"></div>
<div style="position:absolute;left:522.75px;top:366.00px;width:420.25px;height:142.20px;box-sizing:border-box;background:#fff;border-radius:7px;box-shadow:0 2px 4px rgba(40,50,70,0.08);"></div>
<div style="position:absolute;left:967.30px;top:366.00px;width:420.50px;height:142.20px;box-sizing:border-box;background:#fff;border-radius:7px;box-shadow:0 2px 4px rgba(40,50,70,0.08);"></div>
<div style="position:absolute;left:78.00px;top:531.70px;width:420.50px;height:143.00px;box-sizing:border-box;background:#fff;border-radius:7px;box-shadow:0 2px 4px rgba(40,50,70,0.08);"></div>
<div style="position:absolute;left:522.75px;top:531.70px;width:420.25px;height:143.00px;box-sizing:border-box;background:#fff;border-radius:7px;box-shadow:0 2px 4px rgba(40,50,70,0.08);"></div>
<span style="position:absolute;left:102.14px;top:402.90px;white-space:nowrap;line-height:1;font-size:20.4px;font-weight:400;color:#0c0c10;letter-spacing:0.2px;transform:scaleX(1.0637);transform-origin:0 0;-webkit-text-stroke:0.75px #0c0c10;">My Tasks</span>
<span style="position:absolute;left:102.40px;top:448.00px;white-space:nowrap;line-height:1;font-size:14px;font-weight:400;color:#6d717a;letter-spacing:0.134px;">Check your assignments</span>
<span style="position:absolute;left:547.20px;top:402.90px;white-space:nowrap;line-height:1;font-size:20.4px;font-weight:400;color:#0c0c10;letter-spacing:0.2px;transform:scaleX(1.0758);transform-origin:0 0;-webkit-text-stroke:0.75px #0c0c10;">Service Catalog</span>
<span style="position:absolute;left:545.40px;top:448.00px;white-space:nowrap;line-height:1;font-size:14px;font-weight:400;color:#6d717a;letter-spacing:0.162px;">Use the Service Catalog to find the services and typical</span>
<span style="position:absolute;left:546.40px;top:467.70px;white-space:nowrap;line-height:1;font-size:14px;font-weight:400;color:#6d717a;letter-spacing:0.293px;">requests you need</span>
<span style="position:absolute;left:991.10px;top:402.90px;white-space:nowrap;line-height:1;font-size:20.4px;font-weight:400;color:#0c0c10;letter-spacing:0.2px;transform:scaleX(1.0998);transform-origin:0 0;-webkit-text-stroke:0.75px #0c0c10;">Knowledge Base</span>
<span style="position:absolute;left:991.40px;top:448.00px;white-space:nowrap;line-height:1;font-size:14px;font-weight:400;color:#6d717a;letter-spacing:0.174px;">Got a question? Find an answer.</span>
<span style="position:absolute;left:103.20px;top:569.00px;white-space:nowrap;line-height:1;font-size:20.4px;font-weight:400;color:#0c0c10;letter-spacing:0.2px;transform:scaleX(1.0947);transform-origin:0 0;-webkit-text-stroke:0.75px #0c0c10;">Ask a question</span>
<span style="position:absolute;left:102.40px;top:614.40px;white-space:nowrap;line-height:1;font-size:14px;font-weight:400;color:#6d717a;letter-spacing:0.358px;">Contact support for a personal consultation</span>
<span style="position:absolute;left:546.09px;top:569.00px;white-space:nowrap;line-height:1;font-size:20.4px;font-weight:400;color:#0c0c10;letter-spacing:0.2px;transform:scaleX(1.1110);transform-origin:0 0;-webkit-text-stroke:0.75px #0c0c10;">Create Incident</span>
<span style="position:absolute;left:545.40px;top:614.40px;white-space:nowrap;line-height:1;font-size:14px;font-weight:400;color:#6d717a;letter-spacing:0.321px;">Report a problem with your hardware, service, or</span>
<span style="position:absolute;left:546.40px;top:634.00px;white-space:nowrap;line-height:1;font-size:14px;font-weight:400;color:#6d717a;letter-spacing:0.397px;">software</span>
<svg style="position:absolute;left:427.10px;top:389.00px;overflow:visible;" width="48" height="48" viewBox="0 0 48 48"><circle cx="24" cy="24" r="22.4" fill="none" stroke="#5a2bd9" stroke-width="2.8"/><g fill="none" stroke="#5a2bd9" stroke-width="2.6" stroke-linecap="round" stroke-linejoin="round"><rect x="14.2" y="14.4" width="19.7" height="22" rx="2.6"/><rect x="19.2" y="11.4" width="9.7" height="5.2" rx="2.4" fill="#fff"/></g></svg>
<svg style="position:absolute;left:871.55px;top:389.00px;overflow:visible;" width="48" height="48" viewBox="0 0 48 48"><circle cx="24" cy="24" r="22.4" fill="none" stroke="#14c078" stroke-width="2.8"/><g fill="none" stroke="#14c078" stroke-width="2.6" stroke-linecap="round" stroke-linejoin="round"><path d="M11.55 15.9 a3 3 0 0 1 3-3 h5.3 a1.5 1.5 0 0 1 1.2 0.6 l2 2.5 a1.5 1.5 0 0 0 1.2 0.6 h9 a3 3 0 0 1 3 3 v12.5 a3 3 0 0 1-3 3 h-18.7 a3 3 0 0 1-3-3 z"/></g></svg>
<svg style="position:absolute;left:1316.10px;top:389.00px;overflow:visible;" width="48" height="48" viewBox="0 0 48 48"><circle cx="24" cy="24" r="22.4" fill="none" stroke="#0f52cc" stroke-width="2.8"/><g fill="none" stroke="#0f52cc" stroke-width="2.6" stroke-linecap="round" stroke-linejoin="round"><path d="M33.6 11.6 v24.85 h-16 a3.5 3.5 0 0 1-3.5-3.5 v-17.85 a3.5 3.5 0 0 1 3.5-3.5 z"/><path d="M14.1 30.2 h19.5"/></g></svg>
<svg style="position:absolute;left:427.10px;top:555.50px;overflow:visible;" width="48" height="48" viewBox="0 0 48 48"><circle cx="24" cy="24" r="22.4" fill="none" stroke="#2b4a72" stroke-width="2.8"/><g fill="none" stroke="#2b4a72" stroke-width="2.6" stroke-linecap="round" stroke-linejoin="round"><path d="M18.4 19.8 a5.65 4.9 0 1 1 9.2 3.9 c-1.9 1.4-3.5 2.2-3.5 4.0" stroke-width="3.8"/><circle cx="24.1" cy="33.3" r="2.1" fill="#2b4a72" stroke="none"/></g></svg>
<svg style="position:absolute;left:871.55px;top:555.50px;overflow:visible;" width="48" height="48" viewBox="0 0 48 48"><circle cx="24" cy="24" r="22.4" fill="none" stroke="#fb8a13" stroke-width="2.8"/><g fill="none" stroke="#fb8a13" stroke-width="2.6" stroke-linecap="round" stroke-linejoin="round"><path d="M30 11.8 L13.6 16.9 a2.2 2.2 0 0 0 -1.6 2.1 v3.2 a2.2 2.2 0 0 0 1.6 2.1 L30 29.4"/><ellipse cx="31.5" cy="20.6" rx="4.2" ry="9.2"/><path d="M30.3 17.2 a3 3.4 0 0 1 0 6.8 z" fill="#fb8a13" stroke="none"/><path d="M16.9 25.8 l2.3 7.4 a2 2 0 0 0 3.9 -0.9 l-1.7-5.4"/></g></svg>
</div>
</body>
</html>
